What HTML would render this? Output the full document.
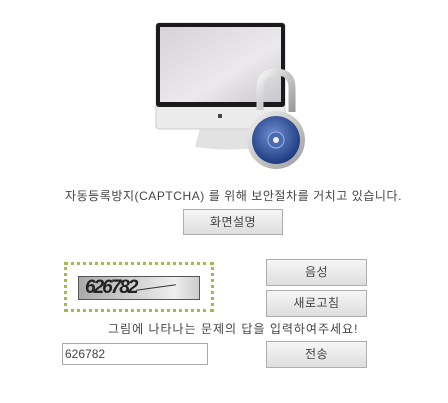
<!DOCTYPE html>
<html><head><meta charset="utf-8"><style>
body{margin:0;width:448px;height:403px;background:#fff;position:relative;overflow:hidden;font-family:"Liberation Sans","Noto Sans CJK KR",sans-serif;color:#444;}
.a{position:absolute}
.btn{position:absolute;box-sizing:border-box;border:1px solid #adadad;background:linear-gradient(#f6f6f6,#dedede);font-size:12px;color:#444;text-align:center;letter-spacing:0.5px}
</style></head><body>
<svg class="a" style="left:140px;top:0" width="180" height="180" viewBox="0 0 180 180">
<defs>
<linearGradient id="scr" x1="0" y1="0" x2="1" y2="1"><stop offset="0" stop-color="#d6d3d8"/><stop offset="0.6" stop-color="#ebe9ec"/><stop offset="1" stop-color="#c9c6cb"/></linearGradient>
<radialGradient id="dial" cx="0.45" cy="0.4" r="0.6"><stop offset="0" stop-color="#6f8fd0"/><stop offset="1" stop-color="#1c3a80"/></radialGradient>
<linearGradient id="met" x1="0" y1="0" x2="1" y2="1"><stop offset="0" stop-color="#f4f4f4"/><stop offset="1" stop-color="#9a9a9a"/></linearGradient>
</defs>
<path d="M60 128 L55 147 Q90 152 125 147 L118 128Z" fill="#e2e2e2"/>
<rect x="16" y="23" width="129" height="106" rx="3" fill="#ececec" stroke="#ccc"/>
<rect x="16" y="23" width="129" height="84" rx="3" fill="#1a1a1a"/>
<rect x="20" y="27" width="121" height="75" fill="url(#scr)"/>
<rect x="78" y="114" width="4" height="4" fill="#444"/>
<path d="M120 110 V88 Q120 72 136 72 Q152 72 152 88 V112" fill="none" stroke="url(#met)" stroke-width="7"/>
<circle cx="136" cy="140" r="29" fill="url(#met)"/>
<circle cx="136" cy="140" r="24" fill="url(#dial)"/>
<circle cx="136" cy="140" r="8" fill="#4a6ab0" stroke="#9fb4e0"/>
<circle cx="136" cy="140" r="3" fill="#eee"/>
</svg>
<div class="a" style="left:65px;top:187px;font-size:12px;letter-spacing:0.55px;white-space:nowrap">자동등록방지(CAPTCHA) 를 위해 보안절차를 거치고 있습니다.</div>
<div class="btn" style="left:183px;top:209px;width:100px;height:26px;line-height:24px">화면설명</div>
<div class="a" style="left:64px;top:262px;width:150px;height:50px;box-sizing:border-box;border:3px dotted #9dbb4e"></div>
<div class="a" style="left:78px;top:276px;width:122px;height:24px;box-sizing:border-box;border:1px solid #555;background:linear-gradient(90deg,#aaa,#eee 80%,#ccc);font:italic bold 19px 'Liberation Sans',sans-serif;color:#222;line-height:22px;padding-left:6px;letter-spacing:-2px;white-space:nowrap">626782<span style="display:inline-block;width:40px;border-top:1px solid #333;vertical-align:middle;transform:rotate(-8deg)"></span></div>
<div class="btn" style="left:266px;top:259px;width:101px;height:27px;line-height:25px">음성</div>
<div class="btn" style="left:266px;top:290px;width:101px;height:27px;line-height:25px">새로고침</div>
<div class="a" style="left:108px;top:320px;font-size:12px;letter-spacing:1px;white-space:nowrap">그림에 나타나는 문제의 답을 입력하여주세요!</div>
<div class="a" style="left:62px;top:343px;width:146px;height:22px;box-sizing:border-box;border:1px solid #aaa;font-size:12px;line-height:20px;padding-left:2px">626782</div>
<div class="btn" style="left:266px;top:341px;width:101px;height:27px;line-height:25px">전송</div>
</body></html>
